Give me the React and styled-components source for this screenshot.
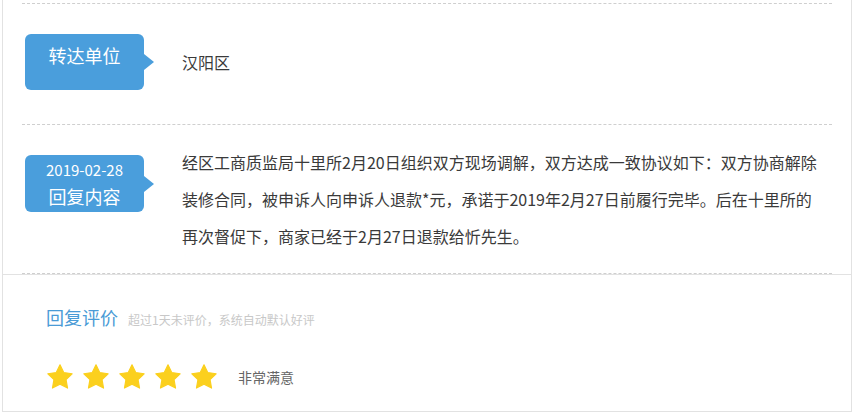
import React from "react";
import styled, { createGlobalStyle } from "styled-components";

const Global = createGlobalStyle`
  html, body { margin: 0; padding: 0; background: #fff; }
  body { font-family: "Noto Sans CJK SC", "Noto Sans", sans-serif; }
`;

const Page = styled.div`
  padding: 0 3px 0 2px;
`;

const Card = styled.div`
  border: 1px solid #e2e2e2;
  border-top: none;
  padding-top: 3px;
  background: #fff;
`;

const List = styled.div`
  padding: 0 19px 0 19px;
`;

const Row = styled.div`
  display: flex;
  align-items: ${(p) => (p.$center ? "center" : "flex-start")};
  border-top: 1px dashed #cfcfcf;
  padding: ${(p) => p.$pad};
  &:last-child { border-bottom: 1px dashed #cfcfcf; }
`;

const Badge = styled.div`
  position: relative;
  flex: 0 0 119px;
  width: 119px;
  min-height: 56px;
  box-sizing: border-box;
  margin-top: ${(p) => p.$mt || 0}px;
  padding-top: 5px;
  background: #4a9edc;
  border-radius: 6px;
  color: #fff;
  text-align: center;
  &::after {
    content: "";
    position: absolute;
    right: -10px;
    top: 50%;
    margin-top: -8px;
    border-style: solid;
    border-width: 8px 0 8px 10px;
    border-color: transparent transparent transparent #4a9edc;
  }
`;

const BadgeDate = styled.div`
  font-size: 15px;
  line-height: 20px;
`;

const BadgeTitle = styled.div`
  font-size: 18px;
  line-height: 32px;
`;

const Content = styled.div`
  margin-left: 38px;
  width: 640px;
  font-size: 16px;
  line-height: 37px;
  color: #3a3a3a;
`;

const Rating = styled.div`
  border-top: 1px solid #e2e2e2;
  padding: 30px 0 20px 43px;
`;

const TitleLine = styled.div`
  display: flex;
  align-items: baseline;
  line-height: 24px;
`;

const RTitle = styled.span`
  font-size: 18px;
  color: #4a9bd6;
`;

const RHint = styled.span`
  margin-left: 10px;
  font-size: 12px;
  color: #c8c8c8;
`;

const StarLine = styled.div`
  display: flex;
  align-items: center;
  margin-top: 31px;
  height: 28px;
  gap: 8px;
`;

const StarIcon = styled.svg`
  width: 28px;
  height: 28px;
  display: block;
`;

const RLabel = styled.span`
  margin-left: 12px;
  font-size: 14px;
  color: #666;
`;

const Star = () => (
  <StarIcon viewBox="0 0 24 24">
    <path
      d="M12 1.6l3.2 6.6 7.2 1-5.2 5.1 1.25 7.2L12 18.1l-6.45 3.4 1.25-7.2-5.2-5.1 7.2-1z"
      fill="#fbd01e"
      stroke="#fbd01e"
      strokeWidth="1"
      strokeLinejoin="round"
    />
  </StarIcon>
);

export default function App() {
  return (
    <Page>
      <Global />
      <Card>
        <List>
          <Row $pad="30px 3px 34px 3px" $center>
            <Badge>
              <BadgeTitle>转达单位</BadgeTitle>
            </Badge>
            <Content>汉阳区</Content>
          </Row>
          <Row $pad="19px 3px 18px 3px">
            <Badge $mt={11}>
              <BadgeDate>2019-02-28</BadgeDate>
              <BadgeTitle>回复内容</BadgeTitle>
            </Badge>
            <Content>
              经区工商质监局十里所2月20日组织双方现场调解，双方达成一致协议如下：双方协商解除装修合同，被申诉人向申诉人退款*元，承诺于2019年2月27日前履行完毕。后在十里所的再次督促下，商家已经于2月27日退款给忻先生。
            </Content>
          </Row>
        </List>
        <Rating>
          <TitleLine>
            <RTitle>回复评价</RTitle>
            <RHint>超过1天未评价，系统自动默认好评</RHint>
          </TitleLine>
          <StarLine>
            <Star />
            <Star />
            <Star />
            <Star />
            <Star />
            <RLabel>非常满意</RLabel>
          </StarLine>
        </Rating>
      </Card>
    </Page>
  );
}
